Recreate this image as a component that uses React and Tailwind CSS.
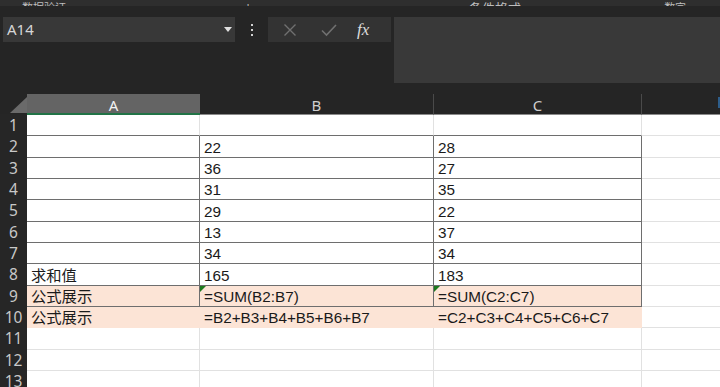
const ROW_H = [21, 22, 21, 21, 22, 21, 21, 22, 21, 21, 22, 21, 21];

const rows = [
  ["", "", ""],
  ["", "22", "28"],
  ["", "36", "27"],
  ["", "31", "35"],
  ["", "29", "22"],
  ["", "13", "37"],
  ["", "34", "34"],
  ["求和值", "165", "183"],
  ["公式展示", "=SUM(B2:B7)", "=SUM(C2:C7)"],
  ["公式展示", "=B2+B3+B4+B5+B6+B7", "=C2+C3+C4+C5+C6+C7"],
  ["", "", ""],
  ["", "", ""],
  ["", "", ""],
];

const widths = ["w-[173px]", "w-[234px]", "w-[208px]"];

function cellClass(r, c) {
  // r is 1-based row, c index 0..2
  if (r === 10) return "bg-[#fce4d6] border-r border-b border-r-[#fce4d6] border-b-[#fce4d6]";
  if (r === 9) return "bg-[#fce4d6] border-r border-b border-[#6e6e6e]";
  if (r >= 2 && r <= 8) return "bg-white border-r border-b border-[#6e6e6e]";
  if (r === 1) return "bg-white border-r border-b border-r-[#e1e1e1] border-b-[#6e6e6e]";
  return "bg-white border-r border-b border-[#e1e1e1]";
}

function Cell({ r, c, text }) {
  const tri = r === 9 && c > 0;
  return (
    <div className={`relative flex items-end shrink-0 h-full pl-[4px] text-[15.3px] leading-[17px] text-[#1a1a1a] ${widths[c]} ${cellClass(r, c)}`}>
      {tri && (
        <svg className="absolute left-0 top-0" width="6" height="6" viewBox="0 0 6 6">
          <path d="M0 0H6L0 6Z" fill="#1d7a1d" />
        </svg>
      )}
      <span className="whitespace-nowrap pb-[1px]">{text}</span>
    </div>
  );
}

function TopStrip() {
  return (
    <div className="h-[6px] bg-[#2e2e2e] overflow-hidden flex items-end text-[#bdbdbd] text-[11px] leading-[11px]">
      <span className="ml-[22px] mb-[-8px]">数据验证</span>
      <span className="ml-[33px] mb-[-2px] w-[6px] h-[2px] bg-[#aaa]" />
      <span className="ml-[142px] mb-[-8px]">'</span>
      <span className="ml-[148px] mb-[-2px] w-[6px] h-[1px] bg-[#aaa]" />
      <span className="ml-[66px] mb-[-8px] text-[13px]">条件格式</span>
      <span className="ml-[72px] mb-[-2px] w-[6px] h-[1px] bg-[#aaa]" />
      <span className="ml-[65px] mb-[-8px]">数字</span>
    </div>
  );
}

function FormulaBar() {
  return (
    <div className="flex h-[66px] mt-[11px]">
      <div className="ml-[3px] w-[232px] h-[25px] bg-[#383838] flex items-center justify-between px-[4px]">
        <span className="text-[15px] text-[#d6d6d6]" style={{ fontFamily: "'Noto Sans', sans-serif" }}>A14</span>
        <svg width="8" height="5" viewBox="0 0 8 5" className="mr-[-1px]">
          <path d="M0 0H8L4 5Z" fill="#e0e0e0" />
        </svg>
      </div>
      <div className="w-[33px] h-[25px] flex flex-col items-center justify-center gap-[3px]">
        <span className="w-[2px] h-[2px] bg-[#d0d0d0]" />
        <span className="w-[2px] h-[2px] bg-[#d0d0d0]" />
        <span className="w-[2px] h-[2px] bg-[#d0d0d0]" />
      </div>
      <div className="w-[123px] h-[25px] bg-[#333333] flex items-center">
        <svg width="14" height="14" viewBox="0 0 14 14" className="ml-[15px]">
          <path d="M1.5 1.5L12.5 12.5M12.5 1.5L1.5 12.5" stroke="#707070" strokeWidth="1.4" />
        </svg>
        <svg width="16" height="14" viewBox="0 0 16 14" className="ml-[24px]">
          <path d="M1 7.5L5.5 12L15 2" stroke="#707070" strokeWidth="1.6" fill="none" />
        </svg>
        <span className="ml-[20px] italic text-[17px] text-[#dcdcdc] leading-none" style={{ fontFamily: "'Liberation Serif', serif" }}>fx</span>
      </div>
      <div className="ml-[3px] flex-1 bg-[#393939]" />
    </div>
  );
}

function Header() {
  return (
    <div className="flex h-[21px] mt-[11px]" style={{ fontFamily: "'Noto Sans', sans-serif" }}>
      <div className="w-[27px] shrink-0 flex items-end justify-end pb-[1px] border-b border-[#262626]">
        <svg width="17" height="16" viewBox="0 0 17 16">
          <path d="M17 0V16H0Z" fill="#6a6a6a" />
        </svg>
      </div>
      <div className="w-[173px] shrink-0 bg-[#646464] border-b-2 border-[#217346] flex items-center justify-center pt-[3px] text-[15px] text-[#f2f2f2]">A</div>
      <div className="w-[234px] shrink-0 border-r border-b border-r-[#4a4a4a] border-b-[#8a8a8a] flex items-center justify-center pt-[3px] text-[15px] text-[#cfcfcf]">B</div>
      <div className="w-[208px] shrink-0 border-r border-b border-r-[#4a4a4a] border-b-[#8a8a8a] flex items-center justify-center pt-[3px] text-[15px] text-[#cfcfcf]">C</div>
      <div className="flex-1 border-b border-[#8a8a8a] flex justify-end items-center">
        <span className="w-[2px] h-[11px] bg-[#2d5d8a] mb-[3px]" />
      </div>
    </div>
  );
}

export default function App() {
  return (
    <div className="w-[720px] h-[387px] overflow-hidden bg-[#252525]" style={{ fontFamily: "'Liberation Sans', 'Noto Sans CJK SC', sans-serif" }}>
      <TopStrip />
      <FormulaBar />
      <Header />
      <div className="flex flex-col">
        {rows.map((row, i) => (
          <div key={i} className="flex shrink-0" style={{ height: ROW_H[i] }}>
            <div className="w-[27px] shrink-0 flex items-center justify-center text-[15.5px] text-[#c8c8c8] bg-[#262626]" style={{ fontFamily: "'Noto Sans', sans-serif" }}>
              {i + 1}
            </div>
            {row.map((t, c) => (
              <Cell key={c} r={i + 1} c={c} text={t} />
            ))}
            <div className="flex-1 bg-white border-b border-[#e1e1e1]" />
          </div>
        ))}
      </div>
    </div>
  );
}
